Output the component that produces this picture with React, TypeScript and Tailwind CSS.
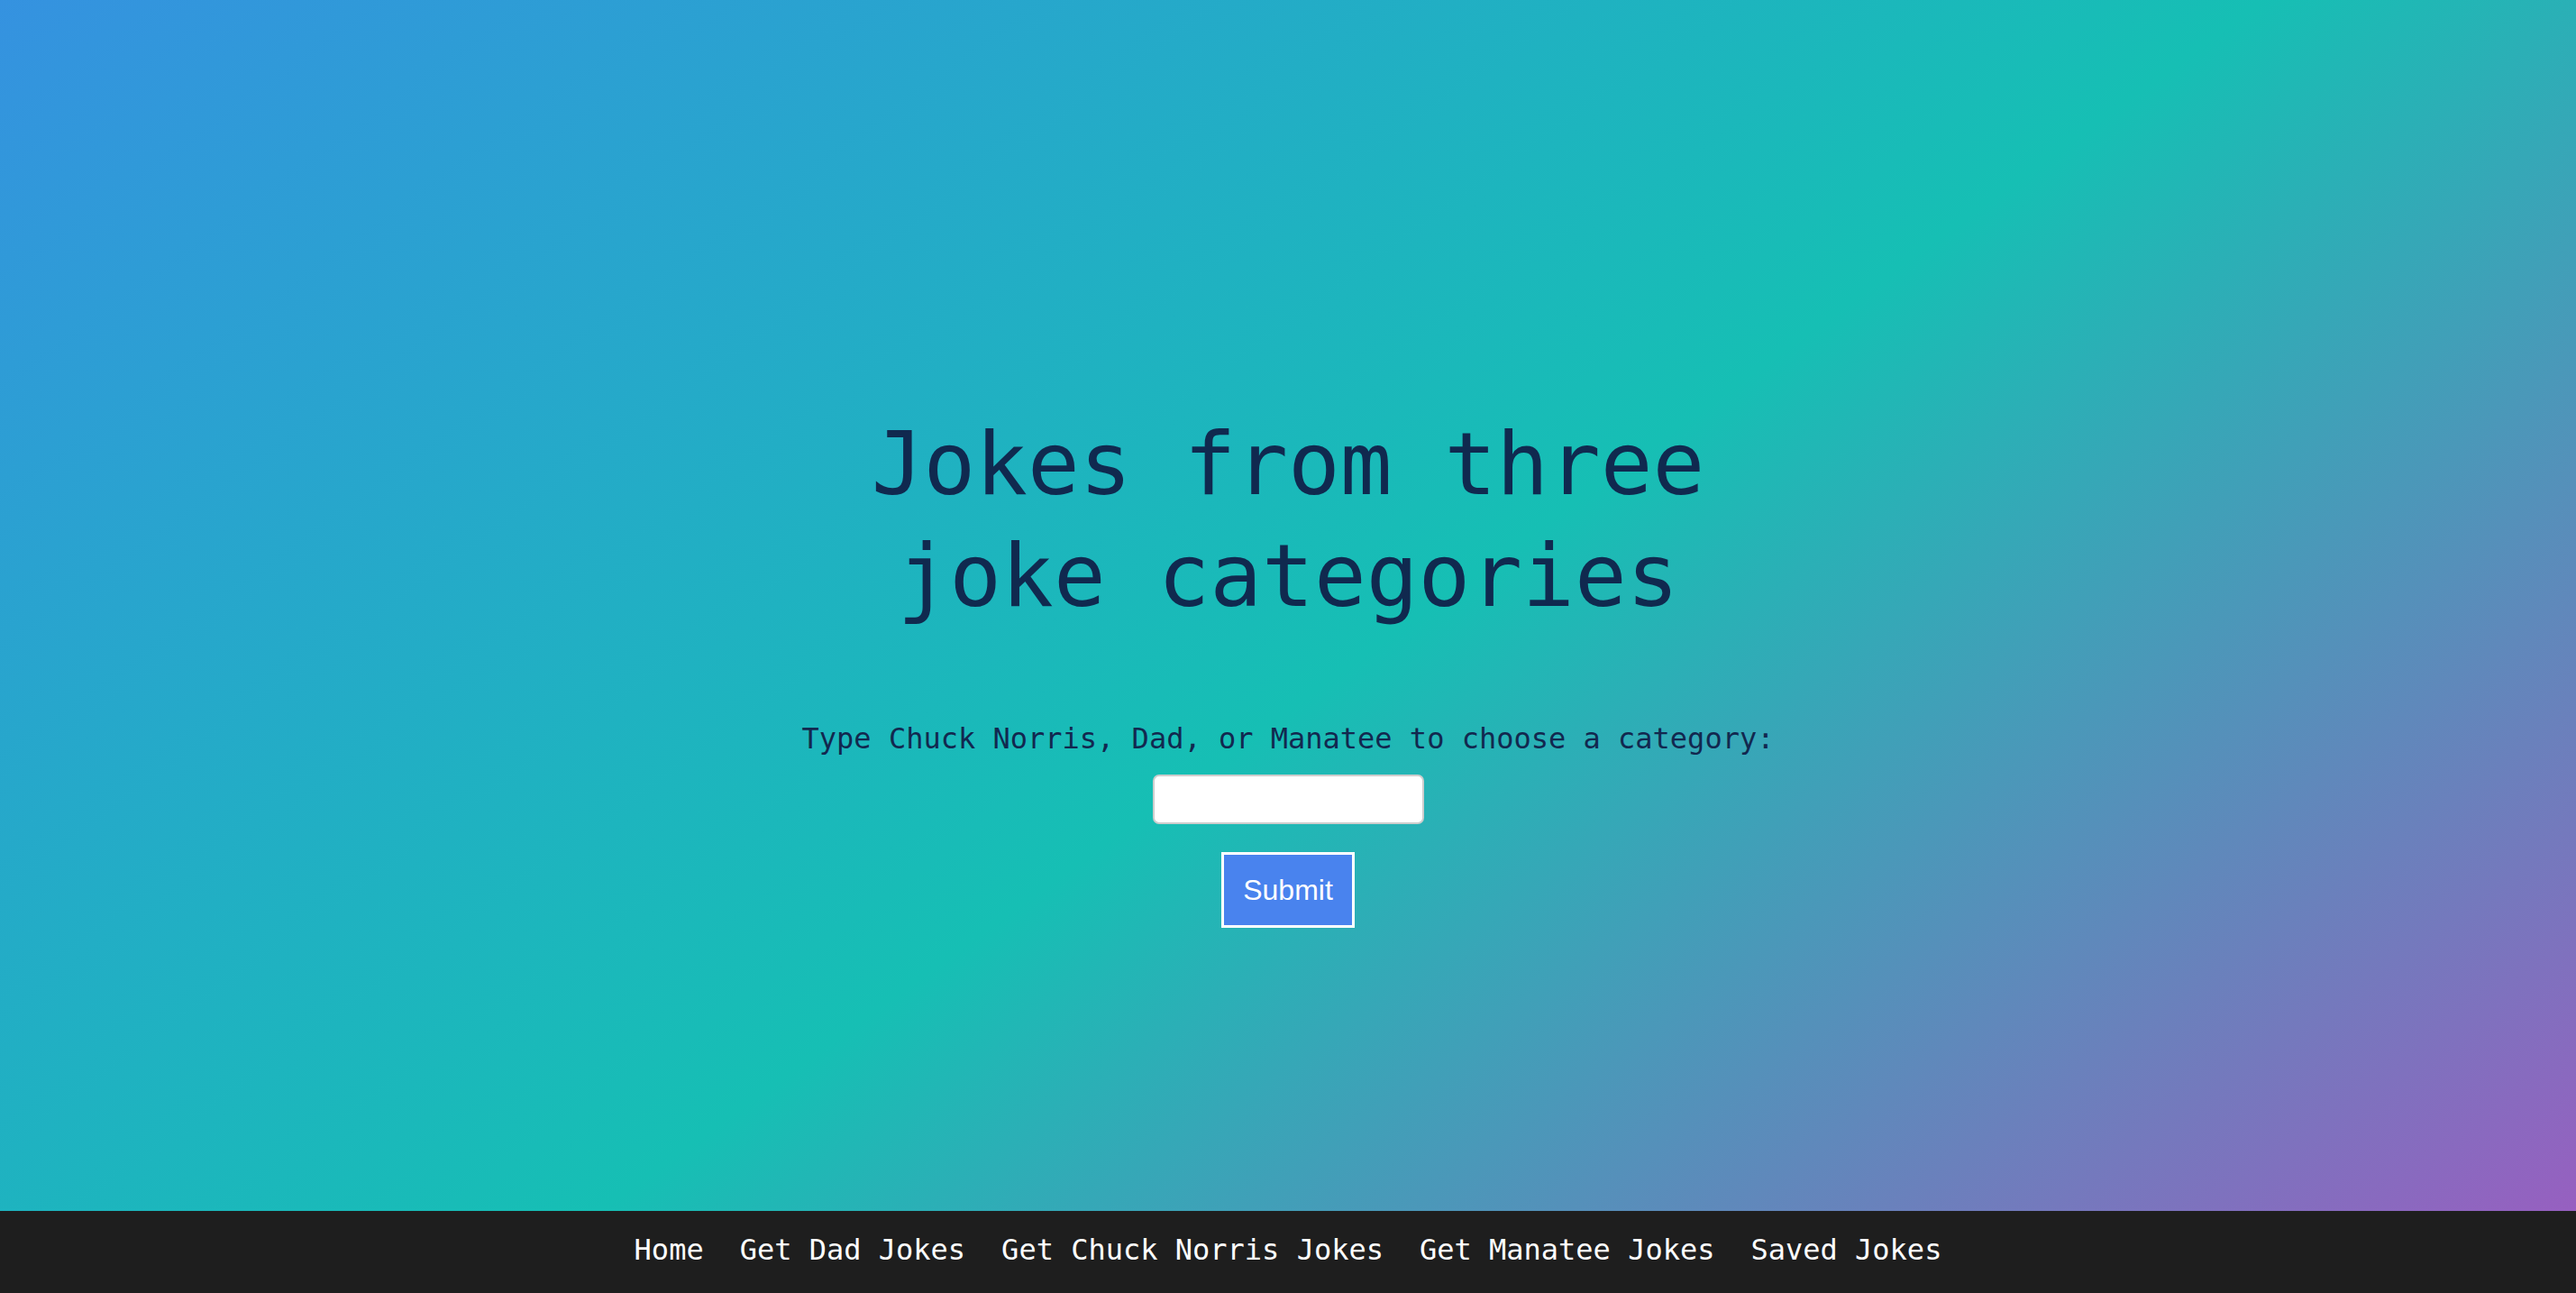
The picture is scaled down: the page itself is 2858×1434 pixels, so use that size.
import React, { useState } from 'react';

const links = ['Home', 'Get Dad Jokes', 'Get Chuck Norris Jokes', 'Get Manatee Jokes', 'Saved Jokes'];

const App: React.FC = () => {
  const [category, setCategory] = useState('');

  const mono = "font-['DejaVu_Sans_Mono','Liberation_Mono',monospace]";

  return (
    <div className="min-h-screen flex flex-col bg-[linear-gradient(144deg,#3592e0_0%,#16bfb4_52%,#9e5ac1_100%)]">
      <main className="flex-1 flex flex-col items-center justify-center pt-[138px]">
        <h1 className={`${mono} text-[96px] leading-[124px] text-[#10294f] text-center font-medium`}>
          Jokes from three
          <br />
          joke categories
        </h1>

        <p className={`${mono} mt-[98px] text-[32px] leading-[40px] text-[#12284f]`}>
          Type Chuck Norris, Dad, or Manatee to choose a category:
        </p>

        <input
          type="text"
          value={category}
          onChange={(e) => setCategory(e.target.value)}
          className="mt-[20px] w-[301px] h-[55px] bg-white border-2 border-[#cdcdcd] rounded-[7px] px-3 text-[28px] outline-none"
        />

        <button className="mt-[31px] w-[148px] h-[84px] bg-[#4983ee] border-[3px] border-white text-white text-[32px] font-['Liberation_Sans',Arial,sans-serif]">
          Submit
        </button>
      </main>

      <footer className="h-[91px] bg-[#1e1e1e] flex items-center justify-center gap-[40px] pb-[5px]">
        {links.map((l) => (
          <a key={l} href="#" className={`${mono} text-[32px] leading-[40px] text-white`}>
            {l}
          </a>
        ))}
      </footer>
    </div>
  );
};

export default App;
